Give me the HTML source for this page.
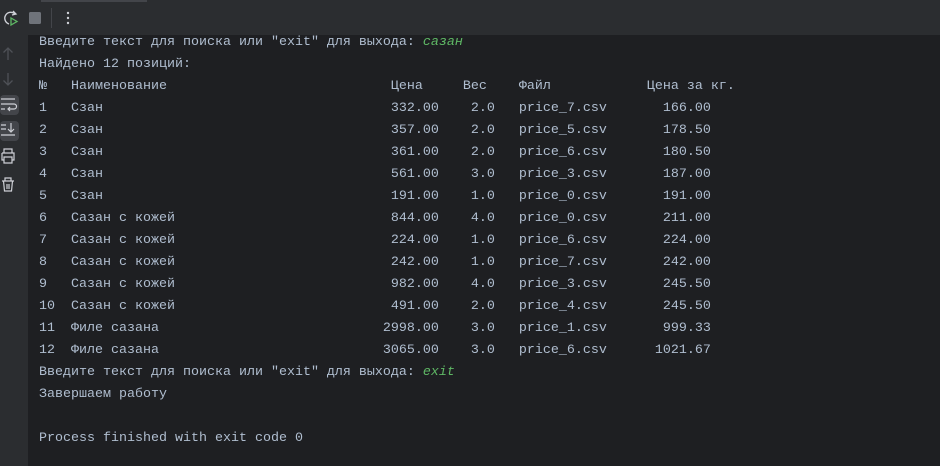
<!DOCTYPE html>
<html><head><meta charset="utf-8"><style>
html,body{margin:0;padding:0;width:940px;height:466px;overflow:hidden;background:#1e1f22}
.top{position:absolute;left:0;top:0;width:940px;height:35px;background:#2b2d30}
.tab{position:absolute;left:41px;top:0;width:106px;height:2px;background:#43454a}
.side{position:absolute;left:0;top:35px;width:28px;height:431px;background:#2b2d30}
.hl{position:absolute;left:0;width:19px;height:20px;background:#43454a;border-radius:4px}
pre{position:absolute;left:39px;top:32px;margin:0;font-family:"Liberation Mono","DejaVu Sans Mono",monospace;font-size:13.33px;line-height:22px;color:#b0bed0}
i{color:#5fb865}
svg{position:absolute}
</style></head><body>
<div class="top"><div class="tab"></div></div>
<svg style="left:0;top:8px" width="80" height="20" viewBox="0 0 80 20">
<path d="M15 6 A6 6 0 1 0 9 16" fill="none" stroke="#ced0d6" stroke-width="1.4"/>
<path d="M13 3 L16 6 L12 7" fill="none" stroke="#ced0d6" stroke-width="1.3"/>
<path d="M11 10 L17 13.5 L11 17 Z" fill="none" stroke="#5fb865" stroke-width="1.3"/>
<rect x="29" y="4" width="12" height="12" rx="1.5" fill="#6f737a"/>
<rect x="51" y="0" width="1" height="20" fill="#43454a"/>
<circle cx="68" cy="5" r="1.2" fill="#ced0d6"/><circle cx="68" cy="10" r="1.2" fill="#ced0d6"/><circle cx="68" cy="15" r="1.2" fill="#ced0d6"/>
</svg>
<div class="side">
<div class="hl" style="top:60px"></div><div class="hl" style="top:86px"></div>
</div>
<svg style="left:0;top:44px" width="28" height="150" viewBox="0 0 28 150">
<g fill="none" stroke="#4e5157" stroke-width="1.3"><path d="M8 16 V4 M3.5 8.5 L8 4 L12.5 8.5"/><path d="M8 29 V41 M3.5 36.5 L8 41 L12.5 36.5"/></g>
<g fill="none" stroke="#ced0d6" stroke-width="1.2">
<path d="M1 55 H15 M1 60 H14 A2.5 2.5 0 0 1 14 65 H8 M10 63 L8 65 L10 67 M1 65 H5"/>
<path d="M1 81 H6 M1 85 H6 M1 91 H15 M11 79 V88 M8 85 L11 88 L14 85"/>
<path d="M4 109 V105 H12 V109 M2 109 H14 V116 H12 M4 116 H2 V109 M4 113 H12 V119 H4 Z"/>
<path d="M2 137 H14 M5 137 V134 H11 V137 M3.5 137 L4.5 147 H11.5 L12.5 137 M7 140 V145 M9 140 V145"/>
</g></svg>
<pre>Введите текст для поиска или "exit" для выхода: <i>сазан</i>
Найдено 12 позиций:
№   Наименование                            Цена     Вес    Файл            Цена за кг.
1   Сзан                                    332.00    2.0   price_7.csv       166.00
2   Сзан                                    357.00    2.0   price_5.csv       178.50
3   Сзан                                    361.00    2.0   price_6.csv       180.50
4   Сзан                                    561.00    3.0   price_3.csv       187.00
5   Сзан                                    191.00    1.0   price_0.csv       191.00
6   Сазан с кожей                           844.00    4.0   price_0.csv       211.00
7   Сазан с кожей                           224.00    1.0   price_6.csv       224.00
8   Сазан с кожей                           242.00    1.0   price_7.csv       242.00
9   Сазан с кожей                           982.00    4.0   price_3.csv       245.50
10  Сазан с кожей                           491.00    2.0   price_4.csv       245.50
11  Филе сазана                            2998.00    3.0   price_1.csv       999.33
12  Филе сазана                            3065.00    3.0   price_6.csv      1021.67
Введите текст для поиска или "exit" для выхода: <i>exit</i>
Завершаем работу

Process finished with exit code 0</pre>
</body></html>
